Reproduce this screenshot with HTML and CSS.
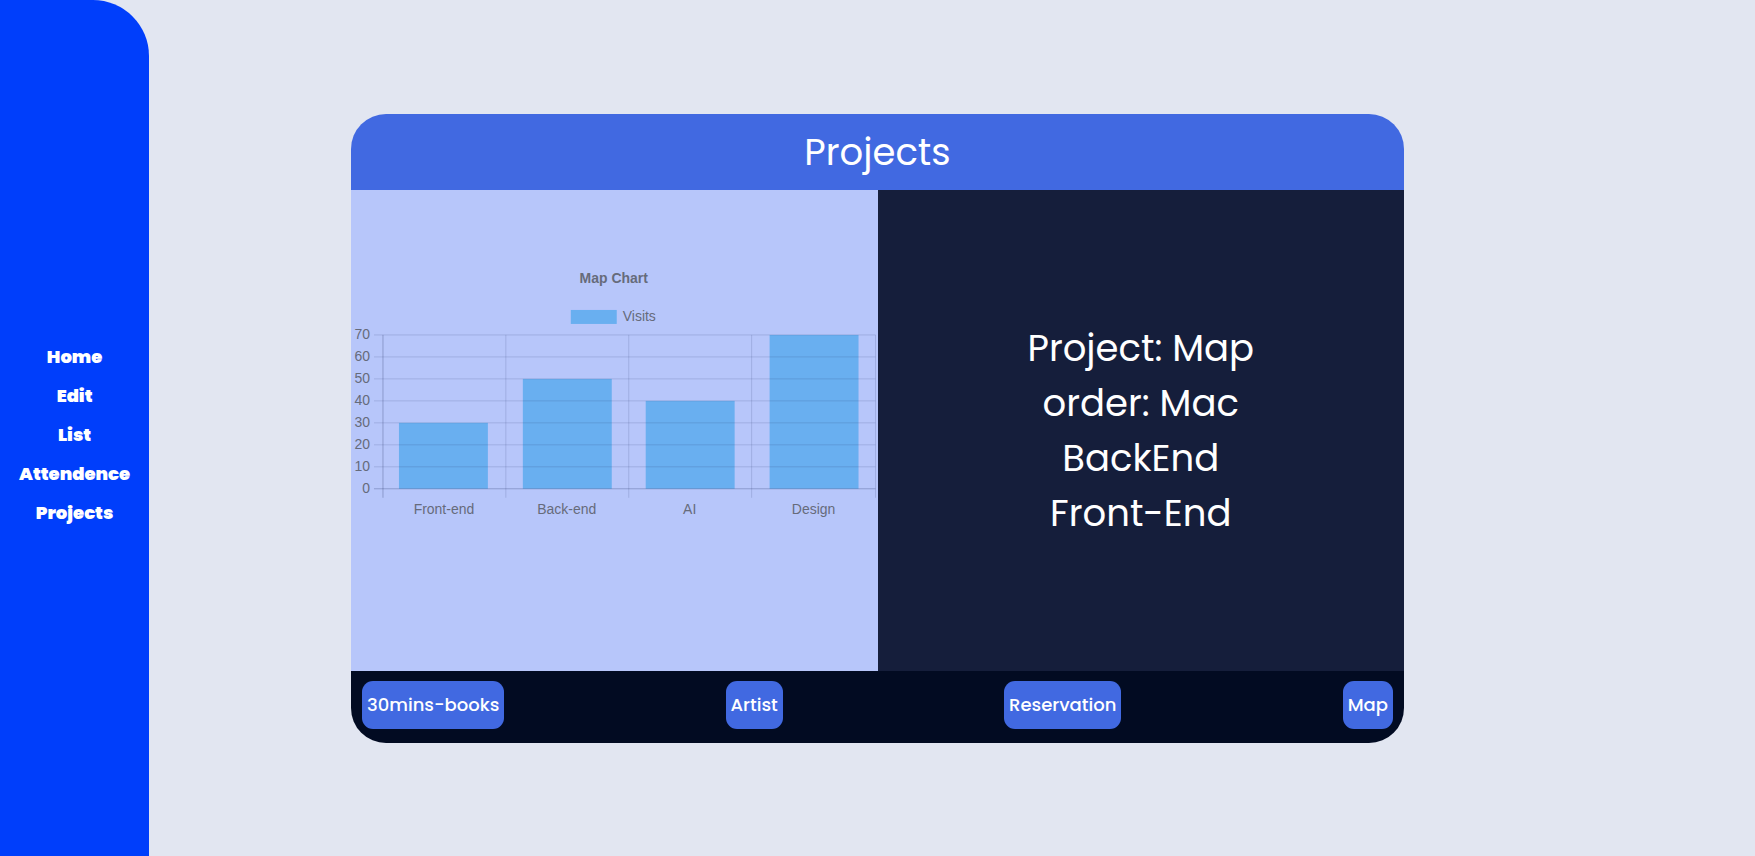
FILE: index.html
```html
<!DOCTYPE html>
<html lang="en">
<head>
<meta charset="utf-8">
<meta name="viewport" content="width=device-width, initial-scale=1">
<title>Projects</title>
<link rel="stylesheet" href="styles.css">
</head>
<body>
<div class="layout">
  <nav class="sidebar" aria-label="Main">
    <a href="#home">Home</a>
    <a href="#edit">Edit</a>
    <a href="#list">List</a>
    <a href="#attendence">Attendence</a>
    <a href="#projects">Projects</a>
  </nav>
  <main class="main">
    <section class="card">
      <h1 class="card-title">Projects</h1>
      <div class="panels">
        <div class="chart-panel">
          <svg class="chart" viewBox="0 0 527 260" role="img" aria-label="Map Chart">
            <text class="chart-title" x="263" y="22">Map Chart</text>
            <rect class="bar" x="220" y="49" width="46" height="14"/>
            <text class="legend" x="272" y="60">Visits</text>
            <g class="bars">
              <rect class="bar" x="48" y="162" width="89" height="66"/>
              <rect class="bar" x="172" y="118" width="89" height="110"/>
              <rect class="bar" x="295" y="140" width="89" height="88"/>
              <rect class="bar" x="419" y="74" width="89" height="154"/>
            </g>
            <path class="grid" d="M23 74H525M23 96H525M23 118H525M23 140H525M23 162H525M23 184H525M23 206H525M155 74V237M278 74V237M401 74V237M525 74V237"/>
            <path class="grid axis" d="M32 74V237M23 228H525"/>
            <g class="y-labels">
              <text x="19" y="78">70</text>
              <text x="19" y="100">60</text>
              <text x="19" y="122">50</text>
              <text x="19" y="144">40</text>
              <text x="19" y="166">30</text>
              <text x="19" y="188">20</text>
              <text x="19" y="210">10</text>
              <text x="19" y="232">0</text>
            </g>
            <g class="x-labels">
              <text x="93" y="253">Front-end</text>
              <text x="216" y="253">Back-end</text>
              <text x="339" y="253">AI</text>
              <text x="463" y="253">Design</text>
            </g>
          </svg>
        </div>
        <div class="details">
          <p>Project: Map</p>
          <p>order: Mac</p>
          <p>BackEnd</p>
          <p>Front-End</p>
        </div>
      </div>
      <div class="actions">
        <button type="button">30mins-books</button>
        <button type="button">Artist</button>
        <button type="button">Reservation</button>
        <button type="button">Map</button>
      </div>
    </section>
  </main>
</div>
</body>
</html>
```
FILE: styles.css
```css
* {
  box-sizing: border-box;
}

body {
  margin: 0;
  background: #e2e6f1;
  color: #fff;
  font-family: Poppins, Inter, sans-serif;
}

.layout {
  display: grid;
  grid-template-columns: 17fr 183fr;
  min-height: 100vh;
}

.sidebar {
  display: flex;
  flex-direction: column;
  align-items: center;
  justify-content: center;
  gap: 12px;
  padding-top: 12px;
  background: #003efb;
  border-top-right-radius: 56px;
}

.sidebar a {
  color: #fff;
  font-size: 18px;
  font-weight: 900;
  line-height: 27px;
  text-decoration: none;
}

.main {
  display: flex;
  align-items: center;
  justify-content: center;
  padding-top: 1px;
  padding-right: 8.5vw;
}

.card {
  display: flex;
  flex-direction: column;
  width: 60vw;
  min-height: 629px;
  overflow: hidden;
  border-radius: 35px;
}

.card-title {
  margin: 0;
  padding: 10px;
  background: #4169e1;
  font-size: 37px;
  font-weight: 400;
  line-height: 56px;
  text-align: center;
}

.panels {
  display: grid;
  flex: 1;
  grid-template-columns: 1fr 1fr;
}

.chart-panel {
  padding-top: 71px;
  background: #b7c6fa;
}

.chart {
  display: block;
  width: 100%;
}

.chart text {
  fill: #666b7b;
  font-family: "Liberation Sans", Arial, sans-serif;
  font-size: 14px;
}

.chart .chart-title {
  font-weight: 700;
  text-anchor: middle;
}

.y-labels {
  text-anchor: end;
}

.x-labels {
  text-anchor: middle;
}

.bar {
  fill: #69aff0;
}

.grid {
  fill: none;
  stroke: rgba(40, 50, 100, 0.16);
}

.axis {
  stroke: rgba(40, 50, 100, 0.3);
}

.details {
  display: flex;
  flex-direction: column;
  align-items: center;
  justify-content: center;
  background: #151e3b;
  font-size: 37px;
  line-height: 55px;
}

.details p {
  margin: 0;
}

.actions {
  display: flex;
  align-items: flex-start;
  justify-content: space-between;
  padding: 10px 11px 14px;
  background: #020b22;
}

.actions button {
  padding: 10px 5px;
  border: 0;
  border-radius: 11px;
  background: #4169e1;
  color: #fff;
  font-family: inherit;
  font-size: 18px;
  font-weight: 500;
  line-height: 28px;
}
```
